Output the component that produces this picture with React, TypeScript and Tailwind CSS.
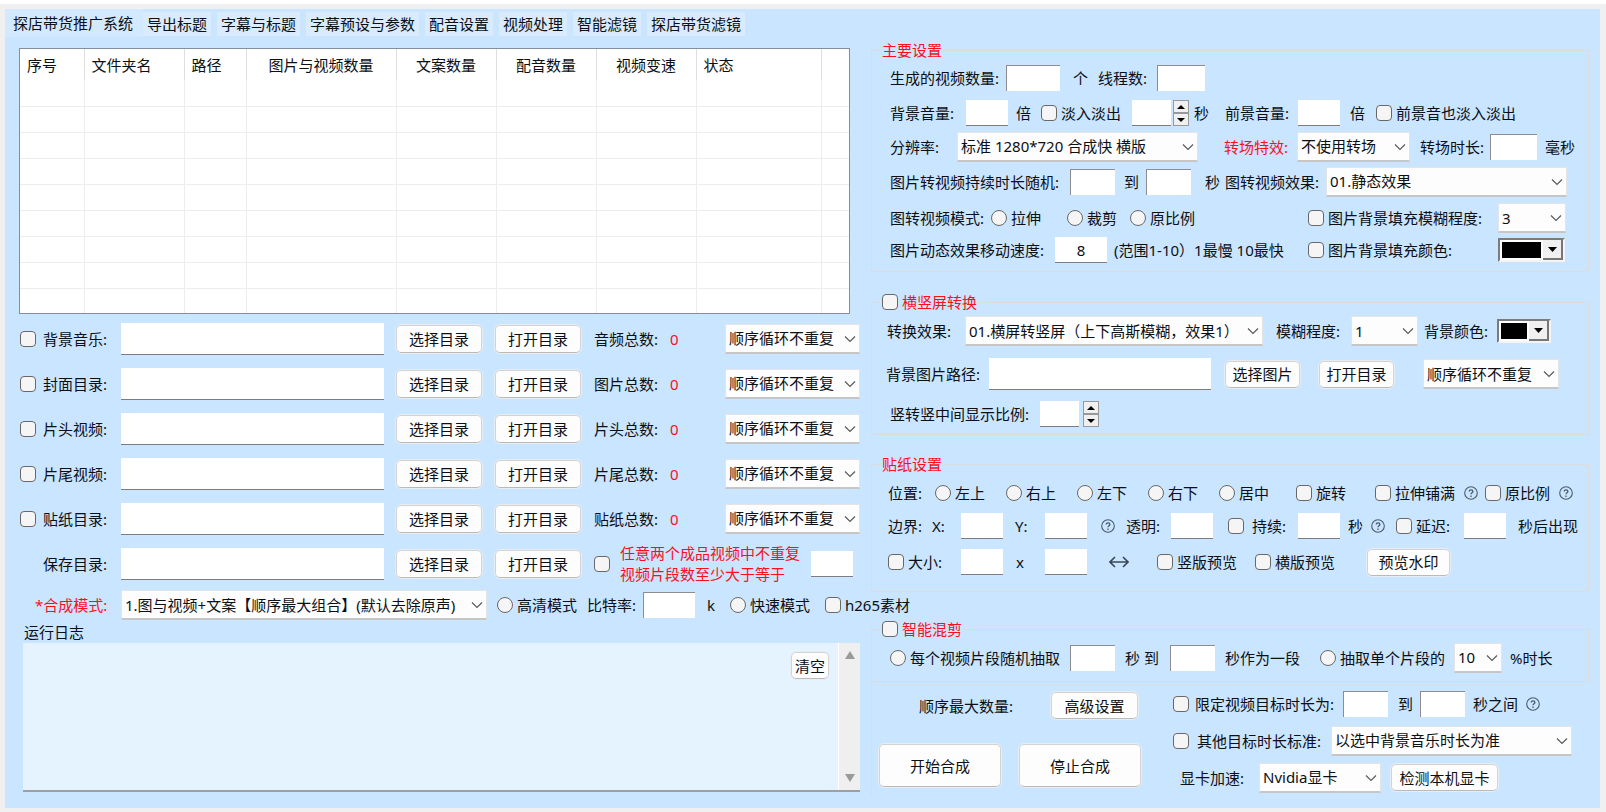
import { useId } from "react";
import type { ReactNode } from "react";

type Box = { className?: string };

function Text({ className = "", children }: Box & { children: ReactNode }) {
  return <span className={`shrink-0 whitespace-nowrap ${className}`}>{children}</span>;
}

function Field({
  label,
  className = "",
  inset = false,
  tall = false,
  value,
}: Box & { label: string; inset?: boolean; tall?: boolean; value?: string }) {
  const edge = inset
    ? "border-l border-t border-l-[#8d8d8d] border-t-[#8d8d8d]"
    : "border-b border-b-[#7d7d7d]";
  return (
    <input
      type="text"
      aria-label={label}
      defaultValue={value}
      className={`${tall ? "h-8 px-2" : "h-[26px]"} ${edge} min-w-0 bg-white text-center outline-none ${className}`}
    />
  );
}

function Check({
  label,
  className = "",
  gap = "gap-1",
  radio,
  red = false,
}: Box & { label: string; gap?: string; radio?: string; red?: boolean }) {
  const id = useId();
  return (
    <span className={`flex shrink-0 items-center ${gap} ${className}`}>
      <input
        id={id}
        type={radio ? "radio" : "checkbox"}
        name={radio}
        className={`size-4 shrink-0 appearance-none border border-[#686868] bg-[#f5f5f5] checked:bg-[#0067c0] ${radio ? "rounded-full" : "rounded-[4px]"}`}
      />
      <label htmlFor={id} className={`whitespace-nowrap ${red ? "text-[#fb0f1c]" : ""}`}>
        {label}
      </label>
    </span>
  );
}

function Select({ label, value, className = "" }: Box & { label: string; value: string }) {
  return (
    <span className={`relative flex h-[30px] shrink-0 ${className}`}>
      <select
        aria-label={label}
        className="h-full w-full min-w-0 appearance-none border border-b-2 border-[#e4e4e4] border-b-[#c6c6c6] bg-[#fdfdfd] pl-[3px] pr-4 outline-none"
      >
        <option>{value}</option>
      </select>
      <svg
        className="pointer-events-none absolute right-1 top-[11px] h-2 w-3"
        viewBox="0 0 12 8"
        fill="none"
        stroke="#5a5a5a"
        strokeWidth="1.200"
      >
        <path d="M1 1.5 6 6.5 11 1.5" />
      </svg>
    </span>
  );
}

function Button({ className = "", children }: Box & { children: ReactNode }) {
  return (
    <button
      type="button"
      className={`shrink-0 whitespace-nowrap rounded-[5px] border border-[#d6d2cf] border-b-[#bdb9b6] bg-[#fdfdfd] outline outline-1 outline-[#e6edf3] ${className}`}
    >
      {children}
    </button>
  );
}

function Spinner({ label, className = "" }: Box & { label: string }) {
  return (
    <span className={`flex h-[26px] w-4 shrink-0 flex-col ${className}`}>
      <button type="button" aria-label={`${label} +`} className="flex flex-1 items-center justify-center border border-[#999] bg-[#f0f0f0]">
        <svg className="h-1 w-2" viewBox="0 0 8 4">
          <path d="M4 0 8 4H0z" />
        </svg>
      </button>
      <button type="button" aria-label={`${label} -`} className="flex flex-1 items-center justify-center border border-[#999] bg-[#f0f0f0]">
        <svg className="h-1 w-2" viewBox="0 0 8 4">
          <path d="M0 0h8L4 4z" />
        </svg>
      </button>
    </span>
  );
}

function Color({ label, className = "" }: Box & { label: string }) {
  return (
    <button
      type="button"
      aria-label={label}
      className={`flex h-6 shrink-0 border-2 border-b-[#f4f4f4] border-l-[#7b7b7b] border-r-[#f4f4f4] border-t-[#7b7b7b] bg-white ${className}`}
    >
      <span className="m-px flex-1 self-stretch border border-white bg-black" />
      <span className="flex w-5 items-center justify-center self-stretch border-b-2 border-r-2 border-[#777] bg-[#f0f0f0]">
        <svg className="h-[5px] w-[9px]" viewBox="0 0 9 5">
          <path d="M0 0h9L4.500 5z" />
        </svg>
      </span>
    </button>
  );
}

function Help({ className = "" }: Box) {
  return (
    <svg className={`size-[14px] shrink-0 ${className}`} viewBox="0 0 14 14" fill="none" stroke="#4b5a68" strokeWidth="1.100">
      <circle cx="7" cy="7" r="6.300" />
      <path d="M5.200 5.600c0-2.400 3.700-2.400 3.700 0 0 1.200-1.900 1.300-1.900 2.700" strokeWidth="1.300" />
      <path d="M7 9.500v1.400" strokeWidth="1.300" />
    </svg>
  );
}

function Group({ title, className = "", children }: Box & { title: ReactNode; children: ReactNode }) {
  return (
    <fieldset className={`mr-[11px] min-w-0 border border-[#dcdcdc] ${className}`}>
      <legend className="ml-[9px] flex h-5 items-center px-px text-[#fb0f1c]">{title}</legend>
      {children}
    </fieldset>
  );
}

const tabs = ["导出标题", "字幕与标题", "字幕预设与参数", "配音设置", "视频处理", "智能滤镜", "探店带货滤镜"];

const columns = [
  { name: "序号", width: "w-[64px]", center: false },
  { name: "文件夹名", width: "w-[100px]", center: false },
  { name: "路径", width: "w-[62px]", center: false },
  { name: "图片与视频数量", width: "w-[150px]", center: true },
  { name: "文案数量", width: "w-[100px]", center: true },
  { name: "配音数量", width: "w-[100px]", center: true },
  { name: "视频变速", width: "w-[100px]", center: true },
  { name: "状态", width: "w-[125px]", center: false },
  { name: "", width: "", center: false },
];

const sources = [
  { name: "背景音乐", total: "音频总数" },
  { name: "封面目录", total: "图片总数" },
  { name: "片头视频", total: "片头总数" },
  { name: "片尾视频", total: "片尾总数" },
  { name: "贴纸目录", total: "贴纸总数" },
];

function FileTable() {
  return (
    <div className="ml-[14px] mr-[21px] h-[266px] overflow-hidden border border-[#828f9c] bg-white">
      <table className="w-full table-fixed border-collapse">
        <colgroup>
          {columns.map((c, i) => (
            <col key={i} className={c.width} />
          ))}
        </colgroup>
        <thead>
          <tr className="h-[31px]">
            {columns.map((c, i) => (
              <th
                key={i}
                className={`whitespace-nowrap px-[7px] font-normal ${i < 8 ? "border-r border-[#dedede]" : ""} ${c.center ? "text-center" : "text-left"}`}
              >
                {c.name}
              </th>
            ))}
          </tr>
        </thead>
        <tbody>
          {Array.from({ length: 9 }, (_, r) => (
            <tr key={r} className="h-[26px]">
              {columns.map((_c, i) => (
                <td key={i} className={`border-b border-[#ededed] ${i < 8 ? "border-r" : ""}`} />
              ))}
            </tr>
          ))}
        </tbody>
      </table>
    </div>
  );
}

function LeftPane() {
  return (
    <section className="flex min-w-0 flex-col pt-2">
      <FileTable />
      <div className="mt-[2px]">
        {sources.map((s) => (
          <div key={s.name} className="flex h-[45px] items-center pl-[15px] pr-[11px]">
            <Check label={`${s.name}:`} gap="gap-[7px]" className="w-[101px]" />
            <Field tall label={s.name} className="mr-3 flex-1" />
            <Button className="mr-[13px] h-7 w-[86px]">选择目录</Button>
            <Button className="mr-[13px] h-7 w-[86px]">打开目录</Button>
            <Text className="w-[76px]">{s.total}:</Text>
            <Text className="w-[55px] text-[#fb0f1c]">0</Text>
            <Select label={`${s.name}顺序`} value="顺序循环不重复" className="w-[135px]" />
          </div>
        ))}
        <div className="flex h-[45px] items-center pl-[15px] pr-[11px]">
          <Text className="w-[101px] pl-[23px]">保存目录:</Text>
          <Field tall label="保存目录" className="mr-3 flex-1" />
          <Button className="mr-[13px] h-7 w-[86px]">选择目录</Button>
          <Button className="mr-[13px] h-7 w-[86px]">打开目录</Button>
          <span className="flex w-[217px] shrink-0 items-center gap-[10px]">
            <input
              id="unique"
              type="checkbox"
              className="size-4 shrink-0 appearance-none rounded-[4px] border border-[#686868] bg-[#f5f5f5] checked:bg-[#0067c0]"
            />
            <label htmlFor="unique" className="whitespace-nowrap leading-[21px] text-[#fb0f1c]">
              任意两个成品视频中不重复
              <br />
              视频片段数至少大于等于
            </label>
          </span>
          <Field label="片段数" className="mr-[7px] w-[42px]" />
        </div>
        <div className="flex h-[38px] items-center pl-[15px]">
          <Text className="w-[101px] pl-[15px] text-[#fb0f1c]">*合成模式:</Text>
          <Select label="合成模式" value="1.图与视频+文案【顺序最大组合】(默认去除原声)" className="mr-[10px] min-w-0 flex-1" />
          <Check radio="quality" label="高清模式" className="w-[90px]" />
          <Text className="w-[56px]">比特率:</Text>
          <Field inset label="比特率" className="mr-3 w-[52px]" />
          <Text className="w-[23px]">k</Text>
          <Check radio="quality" label="快速模式" className="w-[95px]" />
          <Check label="h265素材" className="w-[46px]" />
        </div>
      </div>
      <div className="flex min-h-0 flex-1 flex-col">
        <label htmlFor="log" className="ml-[19px] h-[19px] leading-4">
          运行日志
        </label>
        <div className="relative ml-[18px] mr-[11px] flex h-[149px] border-b-2 border-[#9aa0a6] bg-[#e5f2ff]">
          <textarea id="log" readOnly className="min-w-0 flex-1 resize-none p-2 outline-none" />
          <div className="flex w-[22px] flex-col items-center justify-between border-l border-white bg-[#efefef] py-2">
            <svg className="h-2 w-[10px]" viewBox="0 0 10 8" fill="#9a9a9a">
              <path d="M5 0 10 8H0z" />
            </svg>
            <svg className="h-2 w-[10px]" viewBox="0 0 10 8" fill="#9a9a9a">
              <path d="M0 0h10L5 8z" />
            </svg>
          </div>
          <Button className="absolute right-[31px] top-[9px] h-[27px] w-[38px]">清空</Button>
        </div>
      </div>
    </section>
  );
}

function MainSettings() {
  return (
    <Group title="主要设置" className="pb-[7px]">
      <div className="flex h-9 items-center pl-[18px]">
        <Text className="w-[116px]">生成的视频数量:</Text>
        <Field inset label="生成的视频数量" className="mr-[13px] w-[54px]" />
        <Text className="w-[25px]">个</Text>
        <Text className="w-[59px]">线程数:</Text>
        <Field inset label="线程数" className="w-12" />
      </div>
      <div className="flex h-[34px] items-center pl-[18px]">
        <Text className="w-[76px]">背景音量:</Text>
        <Field label="背景音量" className="mr-2 w-[42px]" />
        <Text className="w-[25px]">倍</Text>
        <Check label="淡入淡出" className="w-[91px]" />
        <Field label="淡入淡出秒数" className="mr-[2px] w-[39px]" />
        <Spinner label="淡入淡出秒数" className="mr-[5px]" />
        <Text className="w-[31px]">秒</Text>
        <Text className="w-[73px]">前景音量:</Text>
        <Field label="前景音量" className="mr-[10px] w-[42px]" />
        <Text className="w-[26px]">倍</Text>
        <Check label="前景音也淡入淡出" />
      </div>
      <div className="flex h-[33px] items-center pl-[18px]">
        <Text className="w-[67px]">分辨率:</Text>
        <Select label="分辨率" value="标准 1280*720 合成快 横版" className="mr-[26px] w-[241px]" />
        <Text className="w-[73px] text-[#fb0f1c]">转场特效:</Text>
        <Select label="转场特效" value="不使用转场" className="mr-[10px] w-[113px]" />
        <Text className="w-[70px]">转场时长:</Text>
        <Field inset label="转场时长" className="mr-2 w-[47px]" />
        <Text>毫秒</Text>
      </div>
      <div className="flex h-[37px] items-center pl-[18px] pr-[21px]">
        <Text className="w-[180px]">图片转视频持续时长随机:</Text>
        <Field inset label="最短时长" className="mr-[9px] w-[45px]" />
        <Text className="w-[22px]">到</Text>
        <Field inset label="最长时长" className="mr-[14px] w-[45px]" />
        <Text className="w-5">秒</Text>
        <Text className="w-[101px]">图转视频效果:</Text>
        <Select label="图转视频效果" value="01.静态效果" className="min-w-0 flex-1" />
      </div>
      <div className="flex h-9 items-center pl-[18px]">
        <Text className="w-[101px]">图转视频模式:</Text>
        <Check radio="fit" label="拉伸" className="w-[76px]" />
        <Check radio="fit" label="裁剪" className="w-[63px]" />
        <Check radio="fit" label="原比例" className="w-[178px]" />
        <Check label="图片背景填充模糊程度:" className="w-[190px]" />
        <Select label="填充模糊程度" value="3" className="w-[68px]" />
      </div>
      <div className="flex h-7 items-center pl-[18px]">
        <Text className="w-[165px]">图片动态效果移动速度:</Text>
        <Field label="移动速度" value="8" className="mr-[7px] w-[52px]" />
        <Text className="w-[194px]">(范围1-10）1最慢 10最快</Text>
        <Check label="图片背景填充颜色:" className="w-[190px]" />
        <Color label="填充颜色" className="w-[67px]" />
      </div>
    </Group>
  );
}

function Orientation() {
  return (
    <Group title={<Check red label="横竖屏转换" />} className="mt-5 pb-1">
      <div className="flex h-[38px] items-center pl-[15px] pr-[37px]">
        <Text className="w-[78px]">转换效果:</Text>
        <Select label="转换效果" value="01.横屏转竖屏（上下高斯模糊，效果1）" className="mr-[13px] min-w-0 flex-1" />
        <Text className="w-[75px]">模糊程度:</Text>
        <Select label="模糊程度" value="1" className="mr-[6px] w-[67px]" />
        <Text className="w-[73px]">背景颜色:</Text>
        <Color label="背景颜色" className="w-[54px]" />
      </div>
      <div className="flex h-12 items-center pl-[14px] pr-[29px]">
        <Text className="w-[103px]">背景图片路径:</Text>
        <Field tall label="背景图片路径" className="mr-[14px] flex-1" />
        <Button className="mr-[19px] h-[27px] w-[75px]">选择图片</Button>
        <Button className="mr-[29px] h-[27px] w-[75px]">打开目录</Button>
        <Select label="背景图片顺序" value="顺序循环不重复" className="w-[136px]" />
      </div>
      <div className="flex h-8 items-center pl-[18px]">
        <Text className="w-[150px]">竖转竖中间显示比例:</Text>
        <Field label="竖转竖中间显示比例" className="mr-1 w-[39px]" />
        <Spinner label="竖转竖中间显示比例" />
      </div>
    </Group>
  );
}

function Sticker() {
  return (
    <Group title="贴纸设置" className="mt-[19px] pb-[7px]">
      <div className="flex h-[38px] items-center pl-4">
        <Text className="w-[47px]">位置:</Text>
        <Check radio="place" label="左上" className="w-[71px]" />
        <Check radio="place" label="右上" className="w-[71px]" />
        <Check radio="place" label="左下" className="w-[71px]" />
        <Check radio="place" label="右下" className="w-[71px]" />
        <Check radio="place" label="居中" className="w-[77px]" />
        <Check label="旋转" className="w-[79px]" />
        <Check label="拉伸铺满" className="w-[89px]" />
        <Help className="mr-[7px]" />
        <Check label="原比例" className="w-[74px]" />
        <Help />
      </div>
      <div className="flex h-[28px] items-center pl-4">
        <Text className="w-11">边界:</Text>
        <Text className="w-[29px]">X:</Text>
        <Field label="边界X" className="mr-3 w-[42px]" />
        <Text className="w-[30px]">Y:</Text>
        <Field label="边界Y" className="mr-[14px] w-[42px]" />
        <Help className="mr-[11px]" />
        <Text className="w-[45px]">透明:</Text>
        <Field label="透明" className="mr-[15px] w-[42px]" />
        <Check label="持续:" gap="gap-2" className="w-[70px]" />
        <Field label="持续" className="mr-2 w-[42px]" />
        <Text className="w-[23px]">秒</Text>
        <Help className="mr-[11px]" />
        <Check label="延迟:" className="w-[68px]" />
        <Field label="延迟" className="mr-3 w-[42px]" />
        <Text>秒后出现</Text>
      </div>
      <div className="flex h-11 items-center pl-4">
        <Check label="大小:" className="w-[73px]" />
        <Field label="宽" className="mr-[13px] w-[42px]" />
        <Text className="w-[29px]">x</Text>
        <Field label="高" className="mr-[22px] w-[42px]" />
        <svg className="mr-7 h-3 w-5 shrink-0" viewBox="0 0 20 12" fill="none" stroke="#3b4854" strokeWidth="1.600">
          <path d="M1 6h18M6 1 1 6l5 5M14 1l5 5-5 5" />
        </svg>
        <Check label="竖版预览" className="w-[98px]" />
        <Check label="横版预览" className="w-[112px]" />
        <Button className="h-[27px] w-[83px]">预览水印</Button>
      </div>
    </Group>
  );
}

function SmartMix() {
  return (
    <Group title={<Check red label="智能混剪" />} className="mt-[27px] pb-[5px]">
      <div className="flex h-[37px] items-center pl-[18px]">
        <Check radio="mix" label="每个视频片段随机抽取" className="w-[180px]" />
        <Field inset label="抽取最短" className="mr-[10px] w-[45px]" />
        <Text className="w-[45px]">秒 到</Text>
        <Field inset label="抽取最长" className="mr-[10px] w-[45px]" />
        <Text className="w-[95px]">秒作为一段</Text>
        <Check radio="mix" label="抽取单个片段的" className="w-[134px]" />
        <Select label="片段百分比" value="10" className="mr-2 w-12" />
        <Text>%时长</Text>
      </div>
    </Group>
  );
}

function Actions() {
  return (
    <div className="flex border-l border-[#dcdcdc] pt-[3px]">
      <div className="w-[301px] shrink-0">
        <div className="flex h-[41px] items-center pl-[47px]">
          <Text className="w-[132px]">顺序最大数量:</Text>
          <Button className="h-[27px] w-[87px]">高级设置</Button>
        </div>
        <div className="mt-[18px] flex gap-[18px] pl-[7px]">
          <Button className="h-[43px] w-[122px]">开始合成</Button>
          <Button className="h-[43px] w-[122px]">停止合成</Button>
        </div>
      </div>
      <div className="min-w-0 flex-1">
        <div className="flex h-[37px] items-center">
          <Check label="限定视频目标时长为:" gap="gap-[6px]" className="w-[170px]" />
          <Field inset label="目标最短时长" className="mr-[10px] w-[45px]" />
          <Text className="w-[22px]">到</Text>
          <Field inset label="目标最长时长" className="mr-2 w-[45px]" />
          <Text className="w-[53px]">秒之间</Text>
          <Help />
        </div>
        <div className="flex h-[37px] items-center pr-[28px]">
          <Check label="其他目标时长标准:" gap="gap-2" className="w-[158px]" />
          <Select label="其他目标时长标准" value="以选中背景音乐时长为准" className="min-w-0 flex-1" />
        </div>
        <div className="flex h-[37px] items-center pl-[7px]">
          <Text className="w-[79px]">显卡加速:</Text>
          <Select label="显卡加速" value="Nvidia显卡" className="mr-[10px] w-[122px]" />
          <Button className="h-[27px] w-[107px]">检测本机显卡</Button>
        </div>
      </div>
    </div>
  );
}

export default function App() {
  return (
    <div
      lang="zh-CN"
      className="min-h-screen bg-[#f0f0f0] font-['Noto_Sans','Noto_Sans_CJK_SC',sans-serif] text-[15px] leading-5 text-[#0c0f14]"
    >
      <div className="h-1 bg-white" />
      <div className="ml-[5px] mr-[6px] mt-[5px] min-h-[799px] bg-[#cae5ff]">
        <nav className="flex h-[31px] items-start">
          <button type="button" className="h-7 whitespace-nowrap bg-[#d3e9ff] pl-2 pr-[10px]">
            探店带货推广系统
          </button>
          <div className="flex gap-[6px] pt-[3px]">
            {tabs.map((t) => (
              <button key={t} type="button" className="h-6 whitespace-nowrap bg-[#d9ebfd] px-1">
                {t}
              </button>
            ))}
          </div>
        </nav>
        <main className="grid grid-cols-[866fr_729fr]">
          <LeftPane />
          <section className="min-w-0">
            <MainSettings />
            <Orientation />
            <Sticker />
            <SmartMix />
            <Actions />
          </section>
        </main>
      </div>
    </div>
  );
}
